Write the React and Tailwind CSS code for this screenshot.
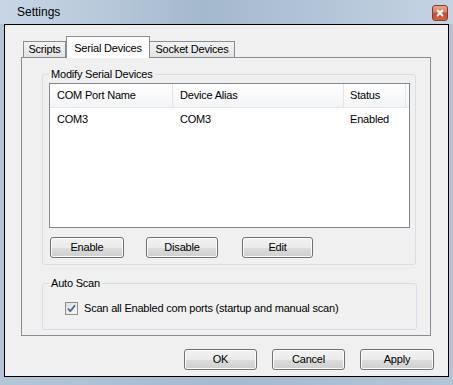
import React from 'react';

const font = "font-['Liberation_Sans',Arial,sans-serif]";

const WinButton = ({ label, width }) => (
  <button
    className={`${width} h-[21px] rounded-[3px] border border-[#707070] text-[11px] tracking-[-0.2px] text-black shadow-[inset_0_0_0_1px_#fbfbfb] bg-[linear-gradient(180deg,#f2f2f2_0%,#ebebeb_50%,#dddddd_51%,#cfcfcf_100%)] flex items-center justify-center`}
  >
    {label}
  </button>
);

const GroupBox = ({ title, className, children }) => (
  <div className={`relative rounded-[3px] border border-[#d5dfe5] ${className}`}>
    <span className="absolute -top-[8px] left-[6px] px-[2px] bg-[#f0f0f0] text-[11px] leading-[14px] tracking-[-0.2px] text-black">
      {title}
    </span>
    {children}
  </div>
);

const CheckBox = () => (
  <span className="w-[13px] h-[13px] border border-[#8e8f8f] bg-[linear-gradient(135deg,#dcdcdc,#fbfbfb)] flex items-center justify-center">
    <svg width="11" height="11" viewBox="0 0 11 11">
      <path d="M2 5.5 L4.3 8.2 L9 2.2" fill="none" stroke="#4a5f97" strokeWidth="1.7" strokeLinejoin="round" />
    </svg>
  </span>
);

export default function App() {
  return (
    <div className={`${font} w-[453px] h-[385px] flex flex-col bg-[linear-gradient(90deg,#b4c5d7,#a6b9cd_50%,#b3c4d6)] overflow-hidden`}>
      {/* Title bar */}
      <div className="h-[24px] flex items-center justify-between pl-[17px] pr-[5px] bg-[linear-gradient(90deg,#c8d6e5_0%,#b9cadb_20%,#a4b8ce_45%,#b2c4d7_70%,#c5d4e3_100%)]">
        <span className="text-[12px] text-black">Settings</span>
        <div className="w-[16px] h-[16px] mt-[2px] rounded-[3px] border border-[#8a3c2a] bg-[linear-gradient(180deg,#e8a793_0%,#d8745a_45%,#c24a2c_55%,#d0684a_100%)] flex items-center justify-center">
          <svg width="8" height="8" viewBox="0 0 8 8">
            <path d="M1 1 L7 7 M7 1 L1 7" stroke="#ffffff" strokeWidth="2" />
          </svg>
        </div>
      </div>

      {/* Client area */}
      <div className="mx-[4px] h-[353px] border border-black bg-[#f0f0f0] flex flex-col">
        <div className="pt-[11px] pl-[16px]">
          {/* Tabs */}
          <div className="flex items-end h-[21px] pl-[2px] text-[11px] tracking-[-0.2px] text-black">
            <div className="w-[43px] h-[16px] border border-b-0 border-[#898c95] bg-[linear-gradient(180deg,#f2f2f2,#e3e3e3)] flex items-center justify-center">
              Scripts
            </div>
            <div className="relative z-10 -mb-px w-[84px] h-[22px] border border-b-0 border-[#898c95] bg-[#fcfcfc] flex items-start justify-center pt-[3px]">
              Serial Devices
            </div>
            <div className="w-[85px] h-[16px] border border-b-0 border-l-0 border-[#898c95] bg-[linear-gradient(180deg,#f2f2f2,#e3e3e3)] flex items-center justify-center">
              Socket Devices
            </div>
          </div>

          {/* Tab panel */}
          <div className="w-[410px] h-[279px] border border-[#898c95] bg-[#f0f0f0] pt-[16px] pl-[20px]">
            <GroupBox title="Modify Serial Devices" className="w-[374px] h-[191px] pt-[8px] pl-[6px]">
              {/* List view */}
              <div className="w-[361px] h-[145px] border border-[#828790] bg-white text-[11px] tracking-[-0.2px] text-black">
                <div className="flex h-[24px] border-b border-[#e5e5e5] bg-[linear-gradient(180deg,#ffffff,#f3f4f6)]">
                  <div className="w-[123px] pl-[7px] flex items-center border-r border-[#e5e5e5]">COM Port Name</div>
                  <div className="w-[171px] pl-[7px] flex items-center border-r border-[#e5e5e5]">Device Alias</div>
                  <div className="w-[62px] pl-[6px] flex items-center border-r border-[#e5e5e5]">Status</div>
                </div>
                <div className="flex h-[18px] mt-[2px]">
                  <div className="w-[123px] pl-[7px] flex items-center">COM3</div>
                  <div className="w-[171px] pl-[7px] flex items-center">COM3</div>
                  <div className="w-[62px] pl-[6px] flex items-center">Enabled</div>
                </div>
              </div>
              <div className="flex mt-[9px] pl-[1px]">
                <WinButton label="Enable" width="w-[74px]" />
                <div className="w-[22px]" />
                <WinButton label="Disable" width="w-[72px]" />
                <div className="w-[24px]" />
                <WinButton label="Edit" width="w-[71px]" />
              </div>
            </GroupBox>

            <GroupBox title="Auto Scan" className="mt-[18px] w-[375px] h-[47px] pt-[16px] pl-[22px]">
              <div className="flex items-center gap-[6px] text-[11px] tracking-[-0.2px] text-black">
                <CheckBox />
                <span>Scan all Enabled com ports (startup and manual scan)</span>
              </div>
            </GroupBox>
          </div>
        </div>

        {/* Dialog buttons */}
        <div className="flex justify-end gap-[15px] mt-[13px] pr-[14px]">
          <WinButton label="OK" width="w-[73px]" />
          <WinButton label="Cancel" width="w-[73px]" />
          <WinButton label="Apply" width="w-[74px]" />
        </div>
      </div>
    </div>
  );
}
